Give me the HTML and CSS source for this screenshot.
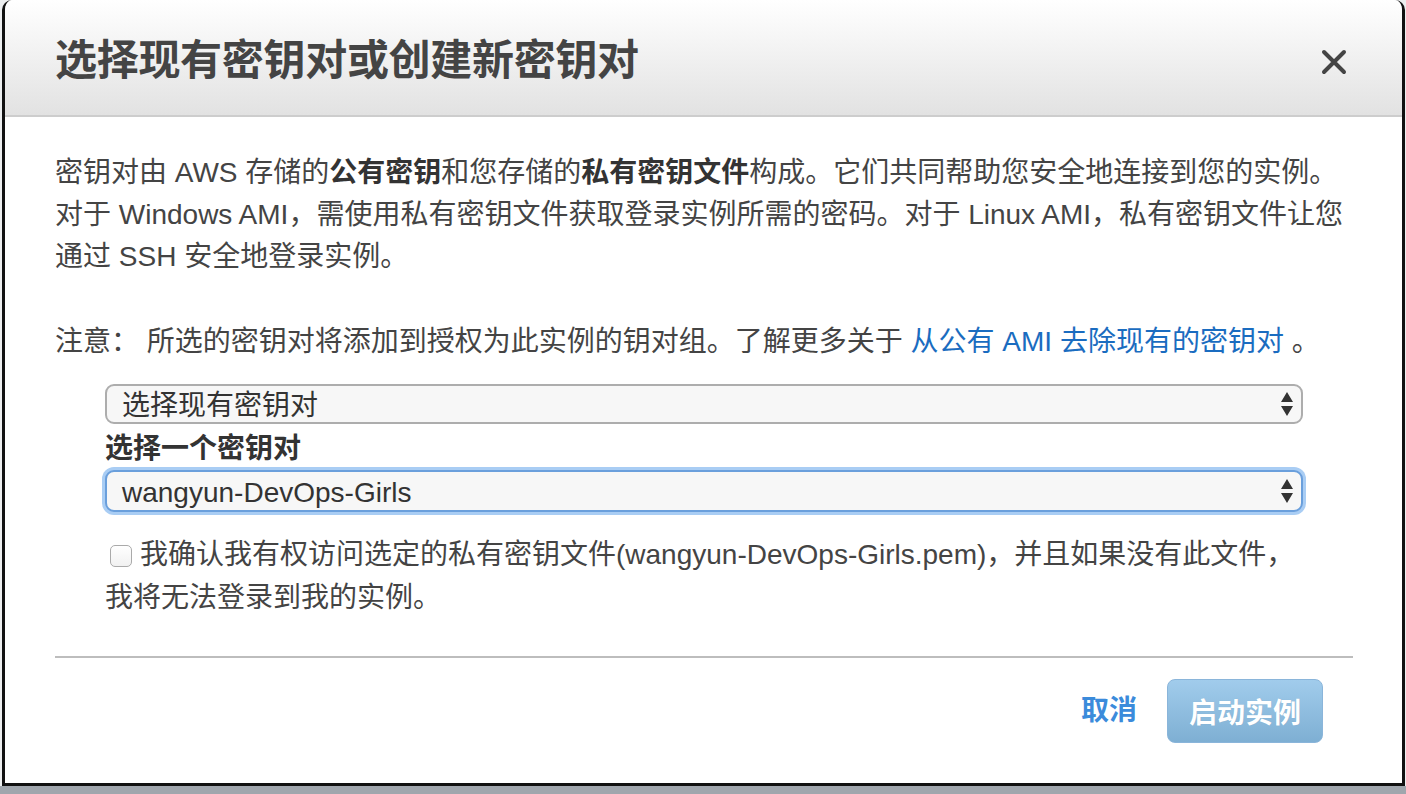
FILE: index.html
```html
<!DOCTYPE html>
<html lang="zh-CN">
<head>
<meta charset="utf-8">
<title>选择现有密钥对或创建新密钥对</title>
<link rel="stylesheet" href="styles.css">
</head>
<body>
<div class="modal">
  <div class="modal-header">
    <h2 class="modal-title">选择现有密钥对或创建新密钥对</h2>
    <button class="close" aria-label="关闭">
      <svg width="28" height="28" viewBox="0 0 28 28"><path d="M4 4 L24 24 M24 4 L4 24" stroke="#444" stroke-width="4" stroke-linecap="round"/></svg>
    </button>
  </div>
  <div class="modal-body">
    <p class="intro">密钥对由 AWS 存储的<b>公有密钥</b>和您存储的<b>私有密钥文件</b>构成。它们共同帮助您安全地连接到您的实例。<br>对于 Windows AMI，需使用私有密钥文件获取登录实例所需的密码。对于 Linux AMI，私有密钥文件让您<br>通过 SSH 安全地登录实例。</p>
    <p class="note">注意： 所选的密钥对将添加到授权为此实例的钥对组。了解更多关于 <a href="#">从公有 AMI 去除现有的密钥对</a> 。</p>
    <div class="form">
      <div class="select">
        <span>选择现有密钥对</span>
        <svg class="arrows" width="14" height="26" viewBox="0 0 14 26"><path d="M1 11 L7 1 L13 11 Z M1 15 L13 15 L7 25 Z" fill="#333"/></svg>
      </div>
      <div class="label">选择一个密钥对</div>
      <div class="select focused">
        <span>wangyun-DevOps-Girls</span>
        <svg class="arrows" width="14" height="26" viewBox="0 0 14 26"><path d="M1 11 L7 1 L13 11 Z M1 15 L13 15 L7 25 Z" fill="#333"/></svg>
      </div>
      <p class="ack"><span class="checkbox"></span>我确认我有权访问选定的私有密钥文件(wangyun-DevOps-Girls.pem)，并且如果没有此文件，<br>我将无法登录到我的实例。</p>
    </div>
    <div class="divider"></div>
    <div class="footer">
      <a href="#" class="cancel">取消</a>
      <button class="launch">启动实例</button>
    </div>
  </div>
</div>
</body>
</html>
```
FILE: styles.css
```css
html, body {
  margin: 0;
  padding: 0;
}
body {
  width: 1406px;
  height: 794px;
  overflow: hidden;
  background: linear-gradient(to bottom, #eceeef 0, #eceeef 786px, #a0a6ad 786px);
  font-family: "Liberation Sans", "Noto Sans CJK SC", sans-serif;
  color: #444;
}
.modal {
  margin-left: 2px;
  width: 1403px;
  height: 786px;
  box-sizing: border-box;
  background: #fff;
  border: 3px solid #111;
  border-top: none;
  border-radius: 10px 10px 0 0;
  overflow: hidden;
}
.modal-header {
  height: 117px;
  box-sizing: border-box;
  padding: 7px 54px 0 50px;
  display: flex;
  align-items: center;
  justify-content: space-between;
  background: linear-gradient(to bottom, #ffffff, #e2e2e2);
  border-bottom: 2px solid #cdcdcd;
}
.modal-title {
  margin: 0;
  font-size: 42px;
  line-height: 1;
  font-weight: 700;
  color: #444;
  letter-spacing: -0.3px;
}
.close {
  border: 0;
  background: none;
  padding: 0;
  margin-top: 2px;
  display: flex;
}
.modal-body {
  padding: 35px 49px 0 50px;
  font-size: 28px;
  line-height: 42px;
}
.intro {
  margin: 0 0 43px;
  white-space: nowrap;
}
.intro b {
  font-weight: 700;
  color: #333;
}
.note {
  margin: 0;
  white-space: nowrap;
}
.note a {
  color: #1a6cc0;
  text-decoration: none;
}
.form {
  margin: 21px 50px 0 50px;
}
.select {
  height: 40px;
  box-sizing: border-box;
  border: 2px solid #adadad;
  border-radius: 9px;
  background: #f7f7f7;
  display: flex;
  align-items: center;
  justify-content: space-between;
  padding: 3px 7px 0 15px;
  color: #333;
}
.select span {
  line-height: 1;
}
.select .arrows {
  margin-top: -3px;
}
.select.focused {
  height: 42px;
  border-color: #6a9fdc;
  box-shadow: 0 0 0 3px #a9cdf4;
}
.label {
  margin-top: 4px;
  font-weight: 700;
  color: #333;
}
.ack {
  margin: 21px 0 0;
  line-height: 43px;
  white-space: nowrap;
}
.checkbox {
  display: inline-block;
  width: 20px;
  height: 20px;
  border: 1px solid #aaa;
  border-radius: 5px;
  background: linear-gradient(#fff, #f1f1f1);
  vertical-align: -3px;
  margin: 0 8px 0 5px;
}
.divider {
  margin-top: 37px;
  border-top: 2px solid #bdbdbd;
}
.footer {
  display: flex;
  justify-content: flex-end;
  align-items: center;
  gap: 30px;
  padding-right: 30px;
  margin-top: 21px;
}
.cancel {
  color: #3b8bdb;
  font-weight: 700;
  text-decoration: none;
}
.launch {
  height: 64px;
  box-sizing: border-box;
  padding: 0 21px;
  border: 1px solid #8ab5da;
  border-radius: 8px;
  background: linear-gradient(to bottom, #a1ccec, #7eafd3);
  color: #fff;
  font-family: inherit;
  font-size: 28px;
  font-weight: 700;
  text-shadow: 0 0 1px rgba(0,0,0,0.1);
}
```
